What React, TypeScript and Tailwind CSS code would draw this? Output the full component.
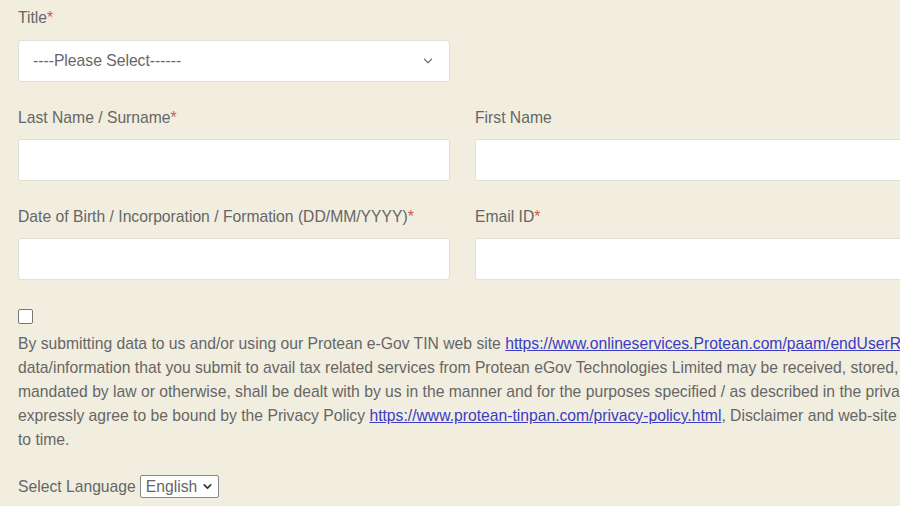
import React from "react";
import { ChevronDown } from "lucide-react";

function Label({ text, required }: { text: string; required?: boolean }) {
  return (
    <label className="block text-[15.7px] leading-[18px] text-[#666]">
      {text}
      {required && <span className="text-[#d9534f]">*</span>}
    </label>
  );
}

function TextBox() {
  return <div className="mt-[12px] h-[42px] w-full rounded-[3px] border border-[#e2e0d6] bg-white" />;
}

export default function App() {
  return (
    <div className="h-[506px] w-[900px] overflow-hidden bg-[#f1eee0] font-['Liberation_Sans',Arial,sans-serif]">
      <div className="w-[1120px] px-[18px] pt-[9px]">
        {/* Title */}
        <div className="w-[432px]">
          <Label text="Title" required />
          <div className="mt-[13px] flex h-[42px] items-center justify-between rounded-[3px] border border-[#e2e0d6] bg-white pl-[14px] pr-[14px]">
            <span className="text-[15.7px] text-[#666]">----Please Select------</span>
            <ChevronDown className="h-[14px] w-[14px] text-[#777]" strokeWidth={2.2} />
          </div>
        </div>

        <div className="mt-[27px] grid grid-cols-[432px_432px] gap-x-[25px] gap-y-[27px]">
          <div>
            <Label text="Last Name / Surname" required />
            <TextBox />
          </div>
          <div>
            <Label text="First Name" />
            <TextBox />
          </div>
          <div>
            <Label text="Date of Birth / Incorporation / Formation (DD/MM/YYYY)" required />
            <TextBox />
          </div>
          <div>
            <Label text="Email ID" required />
            <TextBox />
          </div>
        </div>

        {/* Consent */}
        <div className="mt-[29px]">
          <div className="h-[15px] w-[15px] rounded-[2px] border border-[#777] bg-white" />
          <p className="mt-[8px] whitespace-nowrap text-[15.7px] leading-[24px] text-[#666]">
            By submitting data to us and/or using our Protean e-Gov TIN web site{" "}
            <a className="text-[#3b3bc4] underline">https://www.onlineservices.Protean.com/paam/endUserRegisterContact.html</a>{" "}
            you give your consent that all personal
            <br />
            data/information that you submit to avail tax related services from Protean eGov Technologies Limited may be received, stored, processed, transmitted and or made available for view /use as
            <br />
            mandated by law or otherwise, shall be dealt with by us in the manner and for the purposes specified / as described in the privacy policy or as mandated by law. You also
            <br />
            expressly agree to be bound by the Privacy Policy{" "}
            <a className="text-[#3b3bc4] underline">https://www.protean-tinpan.com/privacy-policy.html</a>, Disclaimer and web-site usage terms and conditions as amended from time
            <br />
            to time.
          </p>
        </div>

        {/* Language */}
        <div className="mt-[23px] flex items-center gap-[4px] text-[15.7px] text-[#666]">
          <span>Select Language</span>
          <div className="flex h-[23px] items-center gap-[4px] rounded-[2px] border border-[#888] bg-white pl-[5px] pr-[4px]">
            <span>English</span>
            <ChevronDown className="h-[13px] w-[13px] text-[#333]" strokeWidth={3} />
          </div>
        </div>
      </div>
    </div>
  );
}
